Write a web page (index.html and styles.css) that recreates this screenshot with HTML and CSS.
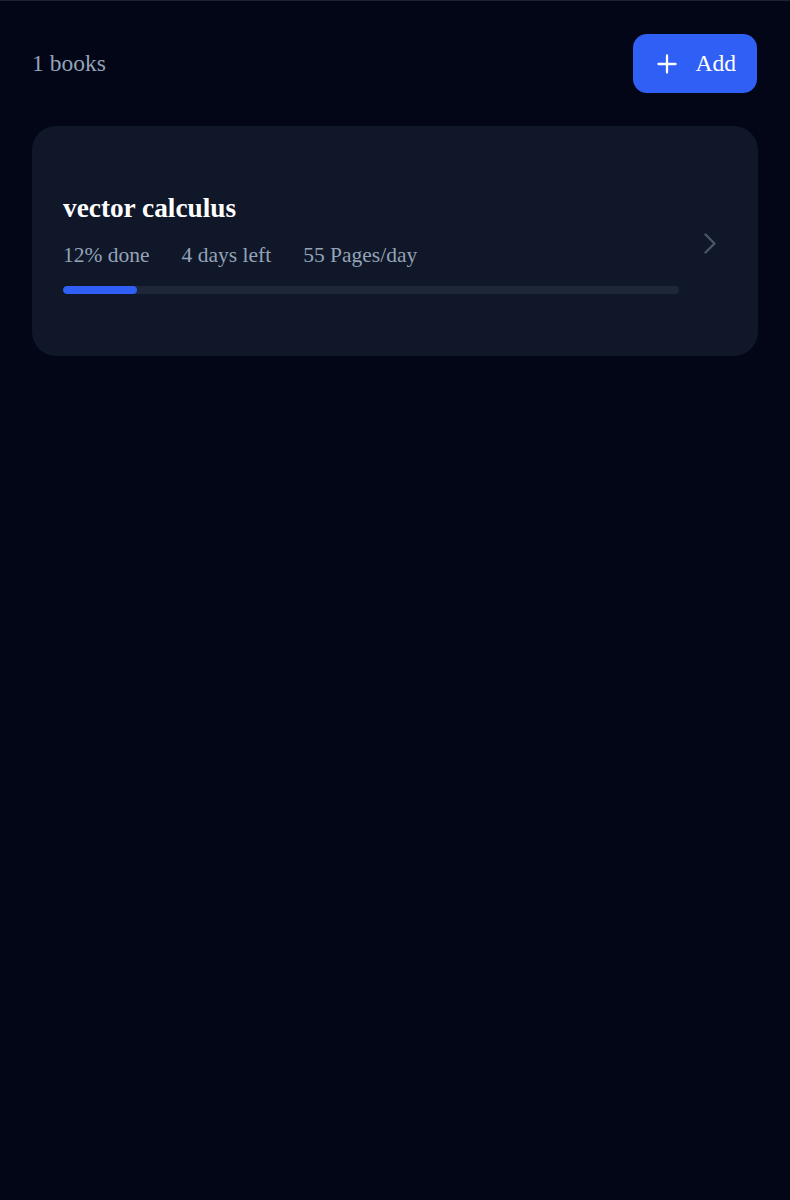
FILE: index.html
```html
<!DOCTYPE html>
<html lang="en">
<head>
<meta charset="utf-8">
<title>Books</title>
<link rel="stylesheet" href="styles.css">
</head>
<body>
<div class="page">
  <header class="header">
    <span class="count">1 books</span>
    <button class="add-btn" type="button">
      <svg class="plus" width="20" height="20" viewBox="0 0 20 20" aria-hidden="true">
        <path d="M10 1.5V18.5M1.5 10H18.5" stroke="#ffffff" stroke-width="2.3" stroke-linecap="round" fill="none"/>
      </svg>
      <span class="add-label">Add</span>
    </button>
  </header>

  <div class="card">
    <div class="card-body">
      <div class="title">vector calculus</div>
      <div class="stats">
        <span>12% done</span>
        <span>4 days left</span>
        <span>55 Pages/day</span>
      </div>
      <div class="track"><div class="fill" style="width:12%"></div></div>
    </div>
    <svg class="chevron" width="14" height="21" viewBox="0 0 14 21" aria-hidden="true">
      <path d="M2.5 1.5L11.5 10.5L2.5 19.5" stroke="#4b5567" stroke-width="2.4" stroke-linecap="round" stroke-linejoin="round" fill="none"/>
    </svg>
  </div>
</div>
</body>
</html>
```

FILE: styles.css
```css
html, body {
  margin: 0;
  padding: 0;
  background: #020617;
}

body {
  font-family: "Liberation Serif", "Times New Roman", serif;
  color: #f8fafc;
  min-height: 1200px;
}

.page {
  border-top: 1px solid #1a2233;
  padding: 33px 32px 32px 32px;
  display: flex;
  flex-direction: column;
  gap: 33px;
}

.header {
  display: flex;
  align-items: center;
  justify-content: space-between;
}

.count {
  font-size: 23.5px;
  line-height: 26px;
  padding-bottom: 2px;
  color: #94a3b8;
}

.add-btn {
  display: flex;
  align-items: center;
  gap: 19px;
  height: 59px;
  padding: 0 21px 0 24px;
  margin-right: 1px;
  border: none;
  border-radius: 14px;
  background: #2f5ff4;
  color: #ffffff;
  font-family: "Liberation Serif", "Times New Roman", serif;
  font-size: 23.5px;
  line-height: 26px;
  cursor: pointer;
}

.add-label {
  padding-bottom: 2px;
}

.plus {
  display: block;
}

.card {
  display: flex;
  align-items: center;
  gap: 24px;
  background: #0f1728;
  border-radius: 24px;
  padding: 67px 41px 62px 31px;
}

.card-body {
  flex: 1;
  display: flex;
  flex-direction: column;
}

.title {
  font-size: 27.3px;
  line-height: 30px;
  font-weight: bold;
  color: #ffffff;
}

.stats {
  margin-top: 21px;
  display: flex;
  gap: 32px;
  font-size: 21.5px;
  line-height: 23px;
  color: #94a3b8;
}

.track {
  margin-top: 19px;
  height: 8px;
  border-radius: 4px;
  background: #1e2738;
  overflow: hidden;
}

.fill {
  height: 100%;
  border-radius: 4px;
  background: #2f5ff4;
}

.chevron {
  display: block;
  flex: none;
}
```
